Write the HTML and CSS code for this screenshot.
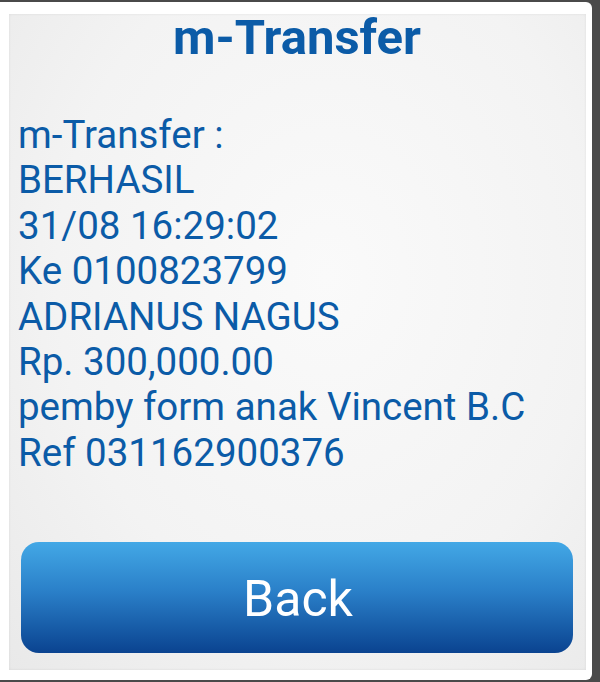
FILE: index.html
```html
<!DOCTYPE html>
<html>
<head>
<meta charset="utf-8">
<link rel="stylesheet" href="styles.css">
</head>
<body>
<div class="dialog">
  <div class="panel">
    <h1 class="title">m-Transfer</h1>
    <div class="message">
      <div class="line">m-Transfer :</div>
      <div class="line">BERHASIL</div>
      <div class="line">31/08 16:29:02</div>
      <div class="line">Ke 0100823799</div>
      <div class="line">ADRIANUS NAGUS</div>
      <div class="line">Rp. 300,000.00</div>
      <div class="line">pemby form anak Vincent B.C</div>
      <div class="line">Ref 031162900376</div>
    </div>
    <button class="back">Back</button>
  </div>
</div>
</body>
</html>
```
FILE: styles.css
```css
html, body {
  margin: 0;
  padding: 0;
  background: #4a4a4a;
  width: 600px;
  height: 682px;
  overflow: hidden;
  font-family: Roboto, "Noto Sans", sans-serif;
}
.dialog {
  margin-top: 2px;
  width: 592px;
  height: 678px;
  background: #ffffff;
  border-radius: 0 6px 6px 0;
  padding: 12px 6px 10px 9px;
  box-sizing: border-box;
}
.panel {
  height: 100%;
  box-sizing: border-box;
  background: radial-gradient(ellipse at 55% 40%, #fafafa 0%, #f3f3f3 60%, #e9e9e9 100%);
  box-shadow: inset 0 0 3px rgba(0,0,0,0.08);
  display: flex;
  flex-direction: column;
  padding: 0 13px 17px 12px;
}
.title {
  margin: -2px 0 0 0;
  text-align: center;
  font-size: 49px;
  font-weight: 700;
  color: #0b5ba7;
  line-height: 52px;
}
.message {
  margin-top: 48px;
  margin-left: -3px;
  color: #0b5ba7;
  font-size: 38.5px;
  line-height: 45.4px;
}
.back {
  margin-top: auto;
  height: 111px;
  width: 100%;
  border: none;
  border-radius: 18px;
  background: linear-gradient(#43a8e6 0%, #2a7fc8 45%, #0a4390 100%);
  color: #ffffff;
  font-family: Roboto, "Noto Sans", sans-serif;
  font-size: 50px;
  padding: 3px 0 0 2px;
}
```
